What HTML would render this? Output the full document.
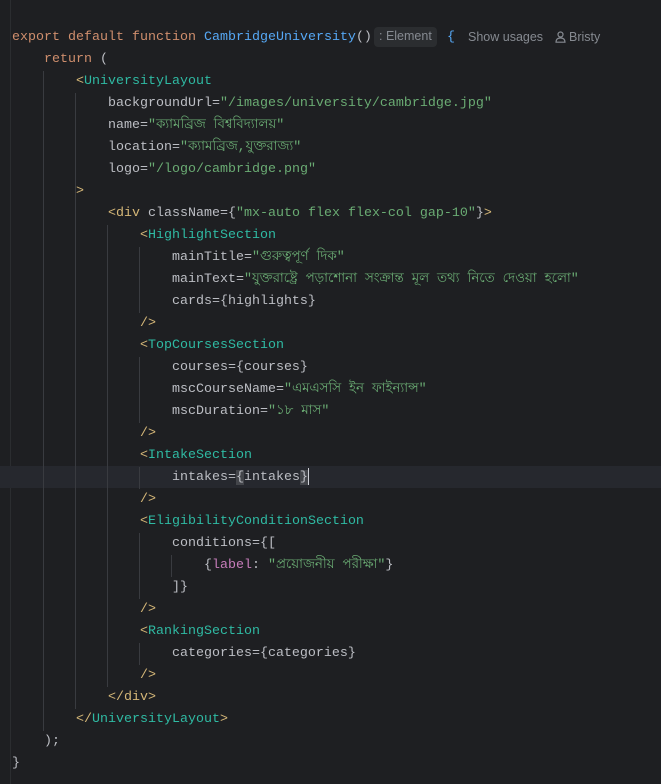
<!DOCTYPE html>
<html><head><meta charset="utf-8"><style>
html,body{margin:0;padding:0;background:#1e1f22;width:661px;height:784px;overflow:hidden}
body{position:relative;font-family:"Liberation Mono","Noto Sans CJK SC",monospace;font-size:13.33px;color:#bcbec4}
#w{position:absolute;left:0;top:2px;width:661px;height:782px}
.l{position:absolute;left:12px;height:22px;line-height:22px;white-space:pre}
.k{color:#cf8e6d}.f{color:#56a8f5}.t{color:#2fbaa3}.b{color:#d5b778}.s{color:#6aab73}
.g{position:absolute;width:1px;background:#393b40}
.hl{position:absolute;left:0;width:661px;top:464px;height:22px;background:#26282e}
.mb{background:#43454a}
.hint{position:absolute;font-family:"Liberation Sans",sans-serif;font-size:12.5px;color:#868a91}
</style></head><body>
<div class="g" style="left:10px;top:0;height:784px;background:#2b2d30"></div>
<div id="w">
<div class="hl"></div>
<div class="g" style="left:43px;top:69px;height:660px"></div>
<div class="g" style="left:75px;top:91px;height:616px"></div>
<div class="g" style="left:107px;top:223px;height:462px"></div>
<div class="g" style="left:139px;top:245px;height:66px"></div>
<div class="g" style="left:139px;top:355px;height:66px"></div>
<div class="g" style="left:139px;top:465px;height:22px"></div>
<div class="g" style="left:139px;top:531px;height:66px"></div>
<div class="g" style="left:139px;top:641px;height:22px"></div>
<div class="g" style="left:171px;top:553px;height:22px"></div>

<div class="l" style="top:25px"><span class="k">export default function </span><span class="f">CambridgeUniversity</span>()</div>
<div style="position:absolute;left:374px;top:25px;width:63px;height:20px;background:#2b2d30;border-radius:4px"></div>
<div class="hint" style="left:379px;top:27px">: Element</div>
<div class="l" style="left:447px;top:25px;color:#56a8f5">{</div>
<div class="hint" style="left:468px;top:28px">Show usages</div>
<svg style="position:absolute;left:555px;top:29px" width="11" height="12" viewBox="0 0 11 12"><circle cx="5.5" cy="3.5" r="2.5" fill="none" stroke="#868a91" stroke-width="1.2"/><path d="M1 11.2 Q1 7 5.5 7 Q10 7 10 11.2 Z" fill="none" stroke="#868a91" stroke-width="1.2"/></svg>
<div class="hint" style="left:569px;top:28px">Bristy</div>

<div class="l" style="top:47px">    <span class="k">return</span> (</div>
<div class="l" style="top:69px">        <span class="b">&lt;</span><span class="t">UniversityLayout</span></div>
<div class="l" style="top:91px">            backgroundUrl=<span class="s">"/images/university/cambridge.jpg"</span></div>
<div class="l" style="top:113px">            name=<span class="s">"ক্যামব্রিজ বিশ্ববিদ্যালয়"</span></div>
<div class="l" style="top:135px">            location=<span class="s">"ক্যামব্রিজ,যুক্তরাজ্য"</span></div>
<div class="l" style="top:157px">            logo=<span class="s">"/logo/cambridge.png"</span></div>
<div class="l" style="top:179px">        <span class="b">&gt;</span></div>
<div class="l" style="top:201px">            <span class="b">&lt;div</span> className={<span class="s">"mx-auto flex flex-col gap-10"</span>}<span class="b">&gt;</span></div>
<div class="l" style="top:223px">                <span class="b">&lt;</span><span class="t">HighlightSection</span></div>
<div class="l" style="top:245px">                    mainTitle=<span class="s">"গুরুত্বপূর্ণ দিক"</span></div>
<div class="l" style="top:267px">                    mainText=<span class="s">"যুক্তরাষ্ট্রে পড়াশোনা সংক্রান্ত মূল তথ্য নিতে দেওয়া হলো"</span></div>
<div class="l" style="top:289px">                    cards={highlights}</div>
<div class="l" style="top:311px">                <span class="b">/&gt;</span></div>
<div class="l" style="top:333px">                <span class="b">&lt;</span><span class="t">TopCoursesSection</span></div>
<div class="l" style="top:355px">                    courses={courses}</div>
<div class="l" style="top:377px">                    mscCourseName=<span class="s">"এমএসসি ইন ফাইন্যান্স"</span></div>
<div class="l" style="top:399px">                    mscDuration=<span class="s">"১৮ মাস"</span></div>
<div class="l" style="top:421px">                <span class="b">/&gt;</span></div>
<div class="l" style="top:443px">                <span class="b">&lt;</span><span class="t">IntakeSection</span></div>
<div class="l" style="top:465px">                    intakes=<span class="mb">{</span>intakes<span class="mb">}</span><span style="display:inline-block;width:1px;height:17px;background:#ced0d6;vertical-align:middle"></span></div>
<div class="l" style="top:487px">                <span class="b">/&gt;</span></div>
<div class="l" style="top:509px">                <span class="b">&lt;</span><span class="t">EligibilityConditionSection</span></div>
<div class="l" style="top:531px">                    conditions={[</div>
<div class="l" style="top:553px">                        {<span style="color:#c77dbb">label</span>: <span class="s">"প্রয়োজনীয় পরীক্ষা"</span>}</div>
<div class="l" style="top:575px">                    ]}</div>
<div class="l" style="top:597px">                <span class="b">/&gt;</span></div>
<div class="l" style="top:619px">                <span class="b">&lt;</span><span class="t">RankingSection</span></div>
<div class="l" style="top:641px">                    categories={categories}</div>
<div class="l" style="top:663px">                <span class="b">/&gt;</span></div>
<div class="l" style="top:685px">            <span class="b">&lt;/div&gt;</span></div>
<div class="l" style="top:707px">        <span class="b">&lt;/</span><span class="t">UniversityLayout</span><span class="b">&gt;</span></div>
<div class="l" style="top:729px">    );</div>
<div class="l" style="top:751px">}</div>
</div>
</body></html>
